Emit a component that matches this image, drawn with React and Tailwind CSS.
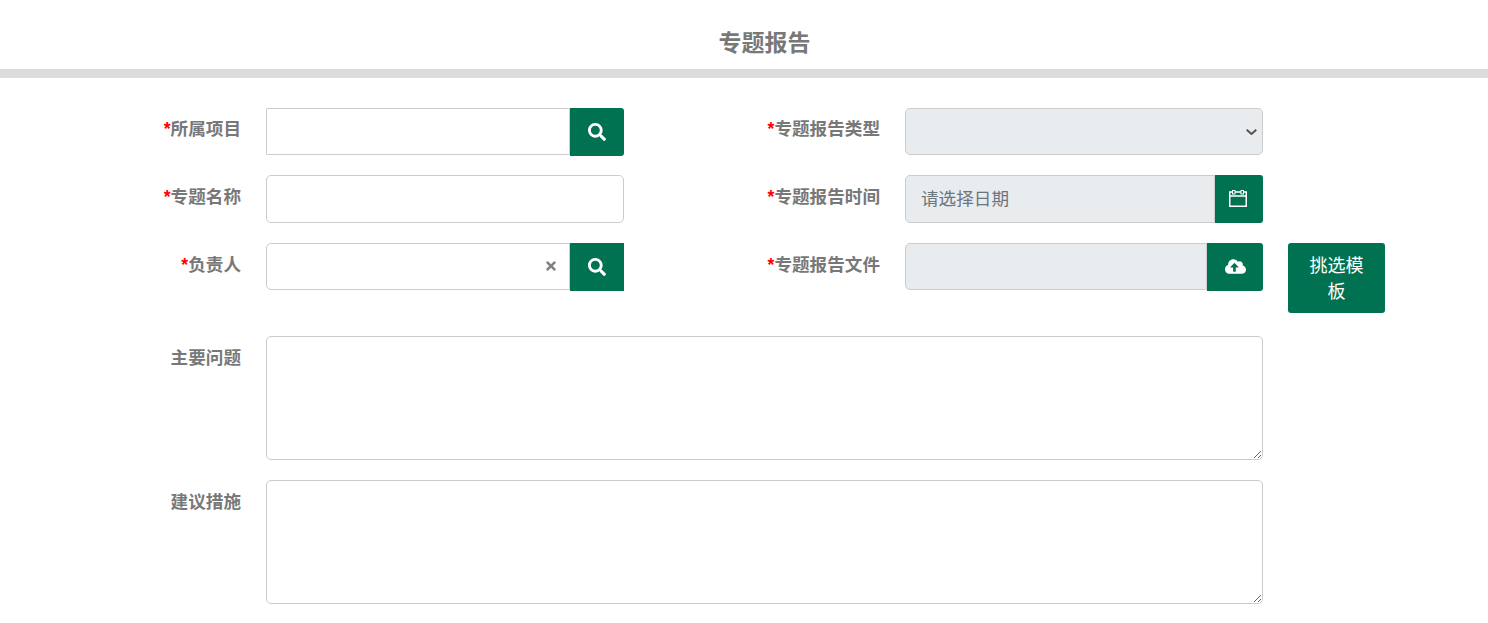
import { FaSearch, FaTimes, FaCloudUploadAlt } from 'react-icons/fa'

const font = { fontFamily: '"Noto Sans CJK SC", sans-serif' }

function Label({ text, required, width, top = 'pt-[8px]' }) {
  return (
    <div className={`${width} ${top} shrink-0 text-right text-[17.6px] leading-[26px] font-bold text-[#787878]`}>
      {required && <span className="text-[#ff0000] font-['Liberation_Sans',sans-serif]">*</span>}
      {text}
    </div>
  )
}

function SearchButton({ rounded }) {
  return (
    <button className={`w-[54px] h-[48px] shrink-0 flex items-center justify-center bg-[#007251] text-white ${rounded}`}>
      <FaSearch size={18} />
    </button>
  )
}

function CalendarIcon() {
  return (
    <svg width="18" height="17" viewBox="0 0 18 17" fill="none" stroke="currentColor">
      <rect x="0.75" y="2" width="16.5" height="14.25" strokeWidth="1.5" />
      <path d="M1 6h16" strokeWidth="1.5" />
      <rect x="3.5" y="0.5" width="2.5" height="3.5" strokeWidth="1" fill="#007251" />
      <rect x="12" y="0.5" width="2.5" height="3.5" strokeWidth="1" fill="#007251" />
    </svg>
  )
}

function App() {
  return (
    <div className="w-[1488px] h-[623px] bg-white overflow-hidden" style={font}>
      <div className="h-[69px] pt-[23px] pl-[41px] text-center text-[23px] leading-[36px] font-bold text-[#787878]">专题报告</div>
      <div className="h-[9px] bg-[#dcdcdc]" />

      <div className="pt-[30px]">
        <div className="flex items-start h-[67px]">
          <Label text="所属项目" required width="w-[241px]" top="pt-[7px]" />
          <div className="ml-[25px] w-[358px] flex">
            <input className="flex-1 min-w-0 h-[47px] border border-[#cccccc] rounded-l-[1px] bg-white" />
            <SearchButton rounded="rounded-r-[3px]" />
          </div>
          <Label text="专题报告类型" required width="w-[256px]" top="pt-[7px]" />
          <div className="relative ml-[25px] w-[358px]">
            <select disabled className="block w-full h-[47px] appearance-none border border-[#cccccc] rounded-[5px] bg-[#e9ecef] text-[#495057]">
              <option></option>
            </select>
            <svg className="absolute right-[6px] top-[21px]" width="11" height="6" viewBox="0 0 11 6" fill="none" stroke="#555555" strokeWidth="2">
              <path d="M0.7 0.7L5.5 5L10.3 0.7" />
            </svg>
          </div>
        </div>

        <div className="flex items-start h-[68px]">
          <Label text="专题名称" required width="w-[241px]" />
          <input className="ml-[25px] w-[358px] h-[48px] border border-[#cccccc] rounded-[5px] bg-white" />
          <Label text="专题报告时间" required width="w-[256px]" />
          <div className="ml-[25px] w-[358px] flex">
            <div className="flex-1 h-[48px] pl-[15px] pb-[2px] flex items-center border border-[#cccccc] rounded-l-[5px] bg-[#e9ecef] text-[17.6px] text-[#6c757d]">请选择日期</div>
            <button className="w-[48px] h-[48px] pr-[2px] pb-[1px] shrink-0 flex items-center justify-center bg-[#007251] text-white rounded-r-[3px]">
              <CalendarIcon />
            </button>
          </div>
        </div>

        <div className="flex items-start h-[93px]">
          <Label text="负责人" required width="w-[241px]" />
          <div className="ml-[25px] w-[358px] flex">
            <div className="flex-1 h-[47px] pr-[11px] pb-[2px] flex items-center justify-end border border-[#cccccc] rounded-l-[5px] text-[#808080]">
              <FaTimes size={14} />
            </div>
            <SearchButton rounded="" />
          </div>
          <Label text="专题报告文件" required width="w-[256px]" />
          <div className="ml-[25px] w-[358px] flex">
            <div className="flex-1 h-[47px] border border-[#cccccc] rounded-l-[5px] bg-[#e9ecef]" />
            <button className="w-[56px] h-[48px] pb-[1px] shrink-0 flex items-center justify-center bg-[#007251] text-white rounded-r-[3px]">
              <FaCloudUploadAlt size={21} />
            </button>
          </div>
          <button className="ml-[25px] w-[97px] h-[70px] px-[16px] pb-[2px] bg-[#007251] text-white text-[18px] leading-[26px] rounded-[3px]">挑选模板</button>
        </div>

        <div className="flex items-start h-[144px]">
          <Label text="主要问题" width="w-[241px]" />
          <textarea className="block ml-[25px] w-[997px] h-[124px] border border-[#cccccc] rounded-[5px]" />
        </div>

        <div className="flex items-start">
          <Label text="建议措施" width="w-[241px]" />
          <textarea className="block ml-[25px] w-[997px] h-[124px] border border-[#cccccc] rounded-[5px]" />
        </div>
      </div>
    </div>
  )
}

export default App
